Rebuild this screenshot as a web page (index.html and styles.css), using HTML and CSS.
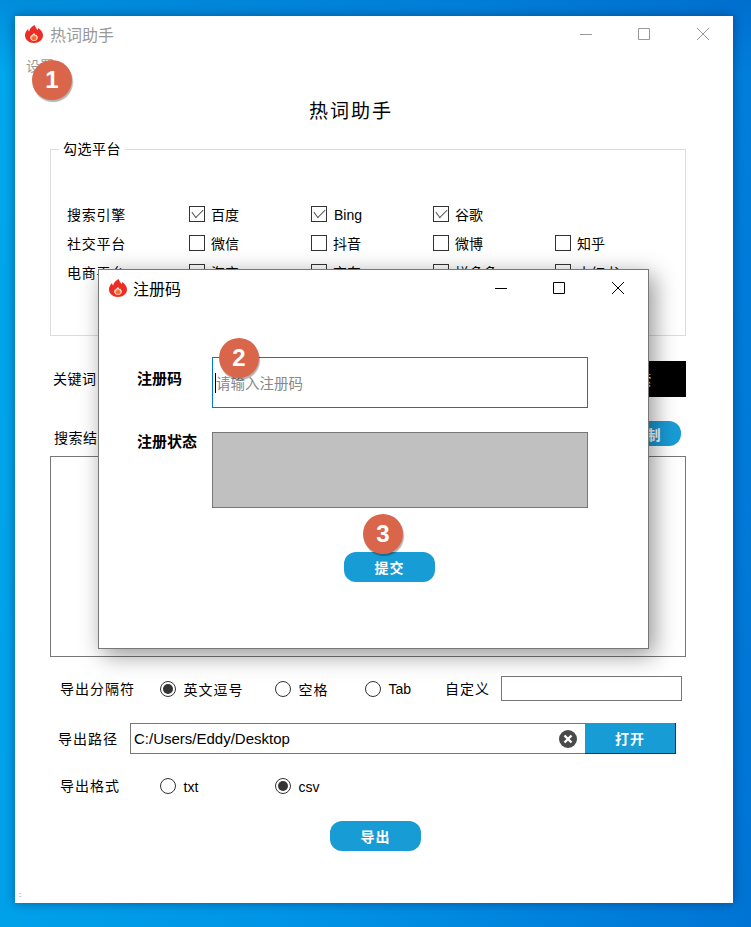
FILE: index.html
```html
<!DOCTYPE html>
<html lang="zh-CN">
<head>
  <meta charset="UTF-8" />
  <title>热词助手</title>
  <link rel="stylesheet" href="styles.css">
</head>
<body>
  <div class="desktop">

    <!-- Main window -->
    <div class="window">
      <div class="titlebar">
        <svg class="flame" viewBox="0 0 18 18"><use href="#flame-icon"/></svg>
        <span class="titlebar-text">热词助手</span>
        <div class="controls">
          <span class="ctl"><svg viewBox="0 0 12 12"><path d="M0 6.5h12"/></svg></span>
          <span class="ctl"><svg viewBox="0 0 12 12"><path d="M.5.5h11v11H.5z"/></svg></span>
          <span class="ctl"><svg viewBox="0 0 12 12"><path d="M0 0l12 12M12 0L0 12"/></svg></span>
        </div>
      </div>
      <div class="menu">设置</div>
      <h1 class="app-title">热词助手</h1>

      <div class="content">
        <fieldset class="platforms">
          <legend>勾选平台</legend>
          <div class="platform-row">
            <span class="platform-label">搜索引擎</span>
            <label class="opt"><i class="check on"></i>百度</label>
            <label class="opt"><i class="check on"></i><span class="latin">Bing</span></label>
            <label class="opt"><i class="check on"></i>谷歌</label>
          </div>
          <div class="platform-row">
            <span class="platform-label">社交平台</span>
            <label class="opt"><i class="check"></i>微信</label>
            <label class="opt"><i class="check"></i>抖音</label>
            <label class="opt"><i class="check"></i>微博</label>
            <label class="opt"><i class="check"></i>知乎</label>
          </div>
          <div class="platform-row">
            <span class="platform-label">电商平台</span>
            <label class="opt"><i class="check"></i>淘宝</label>
            <label class="opt"><i class="check"></i>京东</label>
            <label class="opt"><i class="check"></i>拼多多</label>
            <label class="opt"><i class="check"></i>小红书</label>
          </div>
        </fieldset>

        <div class="keyword-row">
          <span class="keyword-label">关键词</span>
          <div class="keyword-input"></div>
          <button class="search-btn">搜索</button>
        </div>

        <div class="result-head">
          <span class="result-label">搜索结果</span>
          <button class="pill copy-btn">复制</button>
        </div>
        <div class="result-box"></div>

        <div class="sep-row">
          <span class="row-label">导出分隔符</span>
          <label class="radio-opt w115"><i class="radio on"></i>英文逗号</label>
          <label class="radio-opt w90"><i class="radio"></i>空格</label>
          <label class="radio-opt w80"><i class="radio"></i><span class="latin-radio">Tab</span></label>
          <span class="custom-label">自定义</span>
          <div class="custom-input"></div>
        </div>

        <div class="path-row">
          <span class="path-label">导出路径</span>
          <div class="path-box">
            <span class="path-text">C:/Users/Eddy/Desktop</span>
            <svg class="clear" viewBox="0 0 18 18">
              <circle cx="9" cy="9" r="9" fill="#4a4a4a"/>
              <path d="M5.500 5.500l7 7M12.500 5.500l-7 7" stroke="#fff" stroke-width="2.400"/>
            </svg>
          </div>
          <button class="open-btn">打开</button>
        </div>

        <div class="format-row">
          <span class="row-label">导出格式</span>
          <label class="radio-opt w115"><i class="radio"></i><span class="latin-radio">txt</span></label>
          <label class="radio-opt"><i class="radio on"></i><span class="latin-radio">csv</span></label>
        </div>

        <button class="pill export-btn">导出</button>
      </div>
      <div class="grip">:</div>
    </div>

    <!-- Register dialog -->
    <div class="dialog">
      <div class="titlebar dialog-bar">
        <svg class="flame" viewBox="0 0 18 18"><use href="#flame-icon"/></svg>
        <span class="dialog-title">注册码</span>
        <div class="controls">
          <span class="ctl"><svg viewBox="0 0 12 12"><path d="M0 6.5h12"/></svg></span>
          <span class="ctl"><svg viewBox="0 0 12 12"><path d="M.5.5h11v11H.5z"/></svg></span>
          <span class="ctl"><svg viewBox="0 0 12 12"><path d="M0 0l12 12M12 0L0 12"/></svg></span>
        </div>
      </div>
      <div class="reg-form">
        <span class="reg-label first">注册码</span>
        <div class="reg-input"><i class="caret"></i>请输入注册码</div>
        <span class="reg-label">注册状态</span>
        <div class="reg-status"></div>
      </div>
      <button class="pill submit-btn">提交</button>
    </div>

    <!-- Step badges -->
    <span class="badge badge-1">1</span>
    <span class="badge badge-2">2</span>
    <span class="badge badge-3">3</span>

    <svg class="defs" width="0" height="0">
      <symbol id="flame-icon" viewBox="0 0 18 18">
        <path fill="#ee2b24" d="M9.600 0c.6 2.400 2 3.600 3 5 .4-.6.6-1.300.5-2.100C15.900 4.700 18 7.400 18 10.300 18 14.900 14 18 9 18S0 14.900 0 10.300c0-2.500 1.300-4.700 3.100-6.400 0 1 .3 1.900 1 2.600C4.500 3.700 6.800 1.300 9.600 0z"/>
        <path fill="#ffe9dc" d="M9.300 8c.3 1.100 1 1.500 1.500 2.200.1-.2.200-.4.200-.7 1.100.9 1.800 2 1.800 3.200 0 1.900-1.700 3.200-3.800 3.200s-3.800-1.300-3.800-3.200c0-1 .5-2 1.300-2.700.1.400.2.700.4.900C7 9.700 8 8.500 9.300 8z"/>
        <path fill="#f4702a" d="M9.200 10c.2.700.6 1 1 1.400l.3-.4c.7.600 1.100 1.300 1.100 2.100 0 1.400-1.200 2.400-2.600 2.400s-2.600-1-2.600-2.400c0-.7.300-1.300.8-1.800.1.300.2.500.3.600.2-.8.800-1.500 1.700-1.900z"/>
      </symbol>
    </svg>
  </div>
</body>
</html>
```

FILE: styles.css
```css
/* RESET & GLOBAL */
* { margin:0; padding:0; box-sizing:border-box; }
html, body { height:100%; overflow:hidden; }
body {
  font-family:"Liberation Sans","Noto Sans CJK SC",sans-serif;
  font-size:14px; color:#000;
}
i { font-style:normal; }
button { font-family:inherit; border:none; cursor:pointer; }

/* DESKTOP */
.desktop {
  position:relative; width:751px; height:927px; overflow:hidden;
  background:
    linear-gradient(180deg,rgba(0,60,170,.25) 0,rgba(0,60,170,0) 8%),
    linear-gradient(100deg,#00a8ec 0%,#0094e6 50%,#0074d4 100%);
}
.defs { position:absolute; }

/* WINDOWS */
.window {
  position:absolute; left:15px; top:16px; width:718px; height:887px;
  background:#fff; display:flex; flex-direction:column;
  box-shadow:0 0 10px rgba(0,20,70,.45);
}
.titlebar {
  display:flex; align-items:center; height:36px; padding-left:10px; flex:none;
}
.flame { width:18px; height:18px; flex:none; }
.titlebar-text { margin-left:7px; font-size:16px; color:#999; }
.controls { display:flex; margin-left:auto; padding-right:1px; }
.ctl { width:58.500px; display:flex; justify-content:center; align-items:center; }
.ctl svg { width:12px; height:12px; fill:none; stroke:#999; stroke-width:1; }
.menu { height:26px; line-height:28px; padding-left:11px; color:#999; flex:none; }
.app-title {
  margin:22px 0 0 294px; font-size:19px; font-weight:400; line-height:24px;
  letter-spacing:2px;
}

/* MAIN CONTENT */
.content { padding-left:35px; width:671px; display:flex; flex-direction:column; }
.platforms {
  margin-top:15px; height:197px; border:1px solid #ddd; padding:40px 0 0 16px;
}
.platforms legend { margin-left:-8px; padding:0 4px; line-height:20px; letter-spacing:.5px; }
.platform-row { display:flex; align-items:center; height:29px; }
.platform-label { width:122px; letter-spacing:.75px; }
.opt { width:122px; display:flex; align-items:center; gap:6px; }
.latin { padding:2px 0 0 1px; }
.check {
  position:relative; width:16px; height:16px; border:1px solid #333; flex:none;
}
.check.on::after {
  content:""; position:absolute; left:2px; top:1.500px; width:10px; height:6px;
  border-left:1.500px solid #555; border-bottom:1.500px solid #555;
  transform:rotate(-45deg) skewX(-8deg);
}

.keyword-row { display:flex; align-items:center; height:36px; margin-top:25px; padding-left:3px; }
.keyword-label { width:77px; letter-spacing:.5px; margin-top:-3px; }
.keyword-input { width:460px; height:30px; border:1px solid #777; }
.search-btn {
  width:90px; height:36px; margin-left:auto; padding-right:6px; background:#000; color:#fff;
}

.result-head {
  display:flex; align-items:center; justify-content:space-between;
  height:25px; margin-top:24px; padding:0 5px 0 4px;
}
.result-label { letter-spacing:.5px; margin-top:6px; }
.pill { background:#189cd6; color:#fff; font-weight:700; letter-spacing:1px; font-size:14px; }
.copy-btn { width:71px; height:25px; border-radius:12px; padding-left:2px; }
.result-box { height:201px; margin-top:10px; border:1px solid #777; }

.sep-row, .format-row { display:flex; align-items:center; padding-left:10px; }
.sep-row { height:25px; margin-top:19px; }
.row-label { width:100px; letter-spacing:1px; margin-top:-2px; }
.radio-opt { display:flex; align-items:center; gap:7.500px; letter-spacing:1px; }
.latin-radio { letter-spacing:0; padding-top:1px; }
.w115 { width:115px; }
.w90 { width:90px; }
.w80 { width:80px; }
.radio {
  position:relative; width:16px; height:16px; border:1px solid #333; border-radius:50%; flex:none;
}
.radio.on::after {
  content:""; position:absolute; left:2px; top:2px; width:10px; height:10px;
  border-radius:50%; background:#333;
}
.custom-label { width:56px; letter-spacing:1px; margin-top:-2px; }
.custom-input { width:181px; height:25px; border:1px solid #777; }

.path-row { display:flex; align-items:center; height:31px; margin-top:22px; padding-left:8px; }
.path-label { width:72px; letter-spacing:1px; margin-top:-2px; }
.path-box {
  display:flex; align-items:center; justify-content:space-between;
  width:455px; height:31px; border:1px solid #777; border-right:none;
  padding:0 8px 0 3px; font-size:15px;
}
.clear { width:18px; height:18px; }
.open-btn {
  width:91px; height:31px; background:#189cd6; color:#fff; font-weight:700;
  letter-spacing:1px; font-size:14px;
  border-right:1px solid #063a50; border-bottom:1px solid #063a50;
}

.format-row { height:24px; margin-top:20px; }
.export-btn { width:91px; height:30px; border-radius:12px; margin:23px 0 0 280px; }
.grip { margin-top:auto; padding:0 0 3px 4px; font-size:8px; line-height:10px; color:#555; }

/* DIALOG */
.dialog {
  position:absolute; left:98px; top:269px; width:551px; height:380px;
  background:#fff; border:1px solid #777;
  box-shadow:5px 6px 22px rgba(0,0,0,.42);
}
.dialog .ctl svg { stroke:#000; }
.dialog-title { margin-left:6px; font-size:16px; }
.reg-form {
  display:grid; grid-template-columns:75px 376px; row-gap:24px;
  margin:51px 0 0 38px; align-items:start;
}
.reg-label { font-weight:700; font-size:15px; line-height:20px; }
.reg-label.first { margin-top:12px; }
.reg-input {
  display:flex; align-items:center; height:51px; border:1px solid #0078d7;
  padding:0 0 0 2px; color:#888; font-size:14.500px;
}
.caret { width:1px; height:20px; background:#000; }
.reg-status { height:76px; background:#c0c0c0; border:1px solid #777; }
.submit-btn { display:block; width:91px; height:30px; border-radius:12px; margin:44px 0 0 245px; }

/* BADGES */
.badge {
  position:absolute; width:40px; height:40px; border-radius:50%;
  background:#d9664a; color:#fff; font-weight:700; font-size:24px;
  display:flex; align-items:center; justify-content:center;
  box-shadow:1px 2px 1px rgba(0,0,0,.3);
}
.badge-1 { left:32px; top:60px; }
.badge-2 { left:219px; top:338px; }
.badge-3 { left:363px; top:514px; }
```
